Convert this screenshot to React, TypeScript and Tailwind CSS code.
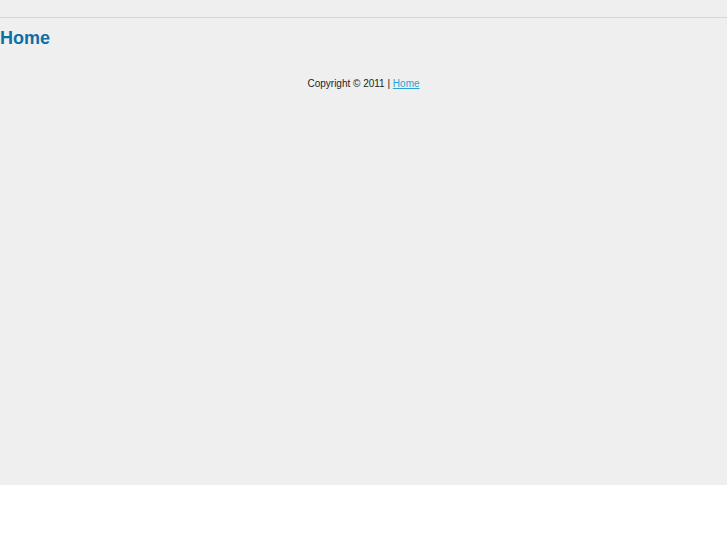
export default function App() {
  return (
    <div className="bg-white min-h-[545px] font-['Liberation_Sans',Arial,sans-serif]">
      <div className="bg-[#efefef] h-[485px]">
        <div className="h-[18px] border-b border-[#d6d6d6]" />
        <h1 className="mt-[8px] text-[18px] leading-[24px] font-bold text-[#0f6ea6]">Home</h1>
        <footer className="mt-[27px] text-center text-[10px] leading-[14px] text-[#222]">
          Copyright © 2011 |{" "}
          <a href="#" className="text-[#29a3d6] underline">
            Home
          </a>
        </footer>
      </div>
    </div>
  );
}
